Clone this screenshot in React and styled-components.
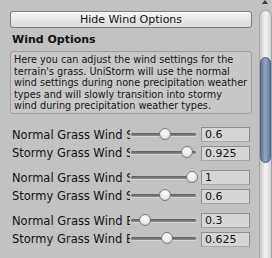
import React from 'react';
import styled, { createGlobalStyle } from 'styled-components';

const GlobalStyle = createGlobalStyle`
  html, body {
    margin: 0;
    padding: 0;
    background: #c2c2c2;
    overflow: hidden;
  }
  body {
    font-family: "DejaVu Sans", "Liberation Sans", sans-serif;
    color: #111;
  }
`;

const Window = styled.div`
  display: flex;
  width: 272px;
  height: 258px;
  overflow: hidden;
  background: #c2c2c2;
`;

const Content = styled.div`
  width: 242px;
  padding: 11px 5px 0 10px;
  display: flex;
  flex-direction: column;
`;

const ToggleButton = styled.button`
  height: 17px;
  padding: 0;
  border: 1px solid #7c7c7c;
  border-radius: 3px;
  background: linear-gradient(#f6f6f6, #dadada);
  font-family: inherit;
  font-size: 11px;
  color: #111;
  line-height: 15px;
  box-shadow: inset 0 1px 0 #fff;
`;

const Header = styled.h3`
  margin: 5px 0 0 2px;
  font-size: 11px;
  font-weight: bold;
  line-height: 14px;
  height: 16px;
`;

const HelpBox = styled.div`
  margin-top: 2px;
  padding: 2px 3px 1px 3px;
  border: 1px solid #9e9e9e;
  border-radius: 3px;
  background: #c8c8c8;
  font-size: 9.7px;
  line-height: 11.5px;
  color: #151515;
  white-space: nowrap;
  overflow: hidden;
`;

const Groups = styled.div`
  margin-top: 12px;
  display: flex;
  flex-direction: column;
  gap: 6px;
`;

const Group = styled.div`
  display: flex;
  flex-direction: column;
`;

const Row = styled.div`
  display: flex;
  align-items: center;
  height: ${p => p.$h || 19}px;
`;

const Label = styled.div`
  width: 120px;
  padding-left: 2px;
  box-sizing: border-box;
  overflow: hidden;
  white-space: nowrap;
  font-size: 11.5px;
`;

const Slider = styled.div`
  position: relative;
  width: 66px;
  height: 14px;
  margin-right: 5px;
`;

const Track = styled.div`
  position: absolute;
  left: 1px;
  right: 0;
  top: 5px;
  height: 3px;
  border-radius: 2px;
  background: linear-gradient(#5a5a5a, #8c8c8c);
  box-shadow: 0 1px 0 #d6d6d6;
`;

const Thumb = styled.div`
  position: absolute;
  top: 0;
  width: 12px;
  height: 12px;
  margin-left: -6px;
  border-radius: 50%;
  border: 1px solid #7a7a7a;
  box-sizing: border-box;
  background: radial-gradient(circle at 50% 35%, #ffffff 0%, #ececec 50%, #c4c4c4 100%);
`;

const Field = styled.div`
  width: 49px;
  height: 15px;
  box-sizing: border-box;
  border: 1px solid #8e8e8e;
  border-bottom-color: #a8a8a8;
  background: #d6d6d6;
  padding-left: 3px;
  font-size: 11px;
  line-height: 13px;
`;

const ScrollBar = styled.div`
  width: 15px;
  display: flex;
  flex-direction: column;
  align-items: center;
`;

const UpArrow = styled.div`
  width: 0;
  height: 0;
  border-left: 3px solid transparent;
  border-right: 3px solid transparent;
  border-bottom: 4px solid #3a3a3a;
`;

const ScrollTrack = styled.div`
  margin-top: 6px;
  margin-left: 1px;
  width: 13px;
  flex: 1;
  border: 1px solid #a4a4a4;
  border-bottom: none;
  border-radius: 7px 7px 0 0;
  box-sizing: border-box;
  background: linear-gradient(90deg, #c4c4c4, #f2f2f2 45%, #f2f2f2 60%, #d0d0d0);
  padding-top: 46px;
`;

const ScrollThumb = styled.div`
  width: 11px;
  height: 106px;
  border-radius: 6px;
  box-sizing: border-box;
  border: 1px solid #4f6284;
  background: linear-gradient(90deg, #5d7399, #8aa1c3 40%, #8aa1c3 60%, #62789e);
`;

const helpLines = [
  'Here you can adjust the wind settings for the',
  "terrain's grass. UniStorm will use the normal",
  'wind settings during none precipitation weather',
  'types and will slowly transition into stormy',
  'wind during precipitation weather types.',
];

const groups = [
  [
    { label: 'Normal Grass Wind Speed', value: 0.6, text: '0.6' },
    { label: 'Stormy Grass Wind Speed', value: 0.925, text: '0.925' },
  ],
  [
    { label: 'Normal Grass Wind Size', value: 1, text: '1' },
    { label: 'Stormy Grass Wind Size', value: 0.6, text: '0.6' },
  ],
  [
    { label: 'Normal Grass Wind Bending', value: 0.3, text: '0.3' },
    { label: 'Stormy Grass Wind Bending', value: 0.625, text: '0.625' },
  ],
];

function SliderRow({ label, value, text, h }) {
  const left = -5 + 67 * value;
  return (
    <Row $h={h}>
      <Label>{label}</Label>
      <Slider>
        <Track />
        <Thumb style={{ left: `${left}px` }} />
      </Slider>
      <Field>{text}</Field>
    </Row>
  );
}

export default function App() {
  return (
    <>
      <GlobalStyle />
      <Window>
        <Content>
          <ToggleButton>Hide Wind Options</ToggleButton>
          <Header>Wind Options</Header>
          <HelpBox>
            {helpLines.map((line, i) => (
              <React.Fragment key={i}>
                {line}
                {i < helpLines.length - 1 && <br />}
              </React.Fragment>
            ))}
          </HelpBox>
          <Groups>
            {groups.map((g, i) => (
              <Group key={i}>
                {g.map((r, j) => (
                  <SliderRow key={j} {...r} h={j === 0 ? 18 : 19} />
                ))}
              </Group>
            ))}
          </Groups>
        </Content>
        <ScrollBar>
          <UpArrow />
          <ScrollTrack>
            <ScrollThumb />
          </ScrollTrack>
        </ScrollBar>
      </Window>
    </>
  );
}
